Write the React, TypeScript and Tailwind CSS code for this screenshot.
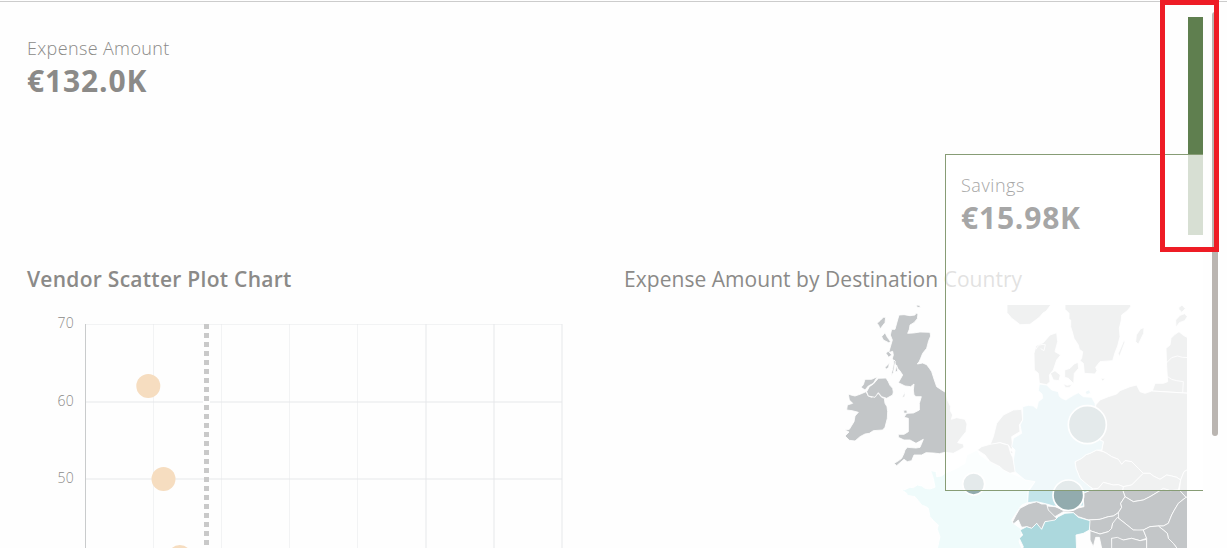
import React from "react";

const land = "#c3c6c8";

const greyLands: string[] = [
  // Great Britain
  "207,75 222,74 240,77 255,75 258,69 264,72 262,86 252,98 240,105 238,118 233,130 250,129 270,126 300,127 302,138 296,152 290,175 278,190 272,205 268,214 262,222 278,219 290,224 299,236 305,245 313,270 320,290 335,300 348,308 352,330 362,350 361,362 368,375 364,388 380,383 405,388 411,402 408,425 392,445 383,458 400,462 402,472 385,482 370,490 345,487 328,491 310,489 288,488 275,495 252,495 245,512 232,515 222,508 200,527 192,520 203,514 215,505 222,490 225,480 232,472 258,474 270,472 280,448 258,460 240,450 222,450 205,442 205,433 222,433 235,425 235,385 222,382 230,370 250,369 268,360 268,340 274,320 258,320 252,315 250,300 252,282 242,290 225,288 205,278 218,255 210,243 204,236 192,215 187,205 190,195 188,184 176,188 187,150 181,135 185,118 195,118 201,96",
  // Ireland
  "55,312 63,315 75,318 92,312 108,305 115,318 125,322 145,310 155,322 163,325 165,340 171,350 173,365 172,385 165,412 158,420 130,422 118,430 105,432 90,440 75,453 58,451 45,438 57,426 44,420 58,418 72,395 75,378 85,367 66,362 50,360 52,345 68,340 58,330",
  "110,305 118,290 130,282 145,265 168,264 175,275 180,286 188,295 190,306 188,315 170,325 155,320 145,308 135,322 115,318",
  "93,292 100,284 105,268 125,268 142,260 130,280 115,288 105,300",
  // Western isles
  "141,100 150,92 160,82 167,82 165,98 150,117 146,106",
  "155,140 165,128 172,142 182,155 176,158 160,150",
  "168,190 175,183 180,190 186,194 176,202",
  "165,232 172,226 178,218 176,232 168,238",
  "183,257 189,232 192,210 196,214 190,248",
  "195,246 200,226 203,244",
  "258,45 268,46 272,53 262,52",
  "216,323 225,307 224,319",
  "221,361 230,360 232,369 222,370",
  // Norway, Sweden
  "531,40 531,68 545,85 555,92 570,104 600,103 620,88 628,82 640,68 648,64 660,48 665,40",
  "705,40 705,58 717,70 717,88 722,90 722,110 727,126 732,145 745,165 748,178 758,185 755,205 750,212 760,220 763,250 795,252 801,242 797,232 810,215 848,212 855,188 863,168 870,140 868,115 874,90 875,75 892,62 902,50 902,40",
  "882,150 885,156 868,201 865,190",
  "932,116 942,113 941,130 925,163 917,155 919,135",
  "1046,53 1056,45 1066,56 1055,67 1047,58",
  "1037,90 1050,76 1064,71 1072,80 1064,92 1048,98 1038,112",
  // Denmark
  "628,280 625,250 613,240 612,190 618,167 640,158 660,135 680,128 683,155 675,185 692,195 680,210 670,240 658,255 660,275 650,284",
  "661,250 675,242 691,255 687,272 670,270",
  "704,240 720,235 732,222 744,217 746,235 733,250 731,281 715,265 704,262",
  "699,281 712,286 727,282 718,293 707,293",
  "812,265 826,265 818,274",
  // Baltic states
  "1047,125 1060,136 1080,147 1080,310 967,303 975,280 1000,280 1013,275 1010,230 1008,175 1020,165 1023,145 1035,133",
  // Netherlands, Belgium
  "480,465 490,440 500,400 520,375 550,360 575,358 578,390 568,405 570,425 545,440 548,470 540,490 550,490 535,465 510,458",
  "442,480 455,470 480,463 510,458 522,462 535,465 542,490 548,502 552,520 558,545 540,550 520,540 510,530 480,515 465,495",
  // Poland
  "797,345 810,330 835,320 860,312 870,302 900,290 920,285 930,305 945,310 965,303 1080,310 1080,535 1062,545 1052,570 1040,562 1025,558 1010,555 990,568 970,558 960,550 940,550 925,535 905,515 885,512 875,523 865,508 845,500 830,490 815,482 820,455 810,450 815,430 815,400 800,375",
  // Czechia, Slovakia
  "735,515 755,505 768,494 780,490 800,480 820,485 830,490 845,500 865,508 875,523 885,512 905,515 925,535 940,550 920,570 905,585 880,590 865,584 850,585 820,577 805,595 790,597 765,580 750,565 738,535",
  "940,550 960,550 970,558 990,568 1010,555 1025,558 1040,562 1052,570 1045,600 1020,602 1000,596 985,605 960,620 940,630 910,635 885,620 878,600 880,590 905,585 920,570",
  // Austria
  "650,648 675,650 700,660 740,655 762,650 758,610 790,597 805,595 820,577 850,585 865,584 880,590 878,600 885,620 872,640 875,652 865,668 850,678 835,680 810,688 775,690 745,680 730,668 700,665 675,680 655,670",
  // Hungary
  "885,620 910,635 940,630 960,620 985,605 1000,595 1020,602 1050,600 1068,622 1045,640 1032,662 1025,675 1015,700 1000,708 985,708 960,710 940,720 925,722 910,720 885,700 860,680 865,668 875,652 872,640",
  // Romania and its northern neighbour
  "1052,570 1062,545 1080,535 1080,620 1068,622 1048,600",
  "1068,622 1080,620 1080,780 1045,780 1030,760 1015,745 1012,730 1000,720 985,708 1000,708 1015,700 1025,675 1032,662 1045,640",
  // Slovenia, Croatia and Bosnia
  "775,690 810,688 835,680 850,678 865,668 866,685 848,700 845,715 835,725 810,732 780,722 776,705",
  "780,722 810,732 835,725 845,715 848,700 862,682 885,700 910,720 940,720 950,745 930,752 905,745 880,750 845,745 848,780 815,775 808,742 797,742 790,770 780,750",
  "845,745 862,742 880,750 905,745 930,752 950,748 950,780 845,780",
  "940,720 960,710 985,708 1000,720 1012,730 1015,745 1030,760 1045,780 950,780 950,745",
  // Switzerland
  "548,695 558,675 570,655 595,642 620,635 635,642 650,642 655,660 670,675 680,685 675,695 645,695 635,718 627,714 620,700 605,715 590,710 575,712 570,702 565,690 550,702",
];

const france =
  "442,480 410,495 405,520 380,535 345,550 335,558 320,560 318,545 302,542 310,565 315,592 300,597 285,595 275,588 262,585 250,593 240,592 225,599 213,598 230,610 232,616 255,620 265,632 275,645 288,650 295,655 300,680 312,694 325,705 322,718 330,740 320,785 580,785 567,755 578,720 550,700 545,690 575,645 593,638 595,600 615,575 580,565 545,550 520,535 480,515 450,495";
const germany =
  "578,350 595,346 610,348 620,356 625,335 638,325 636,312 625,302 628,282 650,285 665,300 685,305 688,318 695,325 708,330 715,325 730,316 745,308 760,320 785,322 795,340 800,375 815,400 815,430 810,450 820,455 815,480 800,480 780,490 768,494 755,505 735,515 738,535 750,565 770,582 788,597 760,610 760,648 670,648 650,642 620,635 593,638 595,605 615,575 585,570 555,545 550,510 555,480 545,470 550,445 575,430 570,405 578,390";
const italy =
  "570,720 590,710 605,715 620,700 635,718 645,695 675,690 685,680 705,670 730,668 745,682 780,692 778,720 760,730 738,735 740,785 575,785 580,770 568,745 578,735";

function EuropeMap() {
  return (
    <svg className="block h-[243px] w-[357px]" viewBox="0 45 1071 729">
      <g stroke="#fff" strokeWidth="2.5" strokeLinejoin="round">
        <polygon points={france} fill="#effbfb" />
        {greyLands.map((points) => (
          <polygon key={points} points={points} fill={land} />
        ))}
        <polygon points={germany} fill="#c3e4ea" />
        <polygon points="765,305 778,299 782,310 770,314" fill="#c3e4ea" />
        <polygon points={italy} fill="#acd8dd" />
        <g fill="none">
          <polyline points="1008,220 1025,203 1042,198 1058,202 1080,203" />
          <polyline points="1013,260 1025,268 1040,272 1060,275 1058,308" />
          <path d="M618 178q6-18 28-14l-4 18-10-6" />
        </g>
      </g>
      <g fill="#92abae" stroke="#fff" strokeWidth="5">
        <circle cx="431" cy="582" r="33" />
        <circle cx="772" cy="404" r="57" />
        <circle cx="715" cy="616" r="46" />
      </g>
    </svg>
  );
}

const columns = [
  { x: 68, w: 1 },
  { x: 136, w: 1 },
  { x: 204, w: 1 },
  { x: 272, w: 1 },
  { x: 340, w: 2 },
  { x: 408, w: 2 },
  { x: 476, w: 2 },
];

function ScatterPlot() {
  return (
    <svg className="block h-[224px] w-[478px]" viewBox="0 0 478 224">
      <g fill="#e5e7ea" fillOpacity="0.5">
        <rect width="477" height="1" />
        <rect y="77" width="477" height="2" />
        <rect y="154" width="477" height="2" />
        {columns.map((c) => (
          <rect key={c.x} x={c.x} width={c.w} height="224" />
        ))}
      </g>
      <rect width="1" height="224" fill="#c9cbcc" />
      <rect x="118" y="76" width="7" height="4" fill="#fefefe" />
      <path d="M121.5 0V224" stroke="#c9c9c9" strokeWidth="5" strokeDasharray="5 4" />
      <g fill="#f6ddc0">
        <circle cx="63.3" cy="62" r="12" />
        <circle cx="78.5" cy="155" r="12" />
        <circle cx="94.8" cy="233" r="12" />
      </g>
    </svg>
  );
}

export default function App() {
  return (
    <div className="relative flex h-[548px] w-full flex-col overflow-hidden bg-[#fefefe] pt-px font-['Open_Sans','Noto_Sans',sans-serif] text-[#8b8a88]">
      <header className="h-[266px] border-t border-[#cccccc] pr-6 pl-[27px]">
        <div className="flex justify-between">
          <div className="pt-[34px]">
            <div className="text-[18px] leading-6 font-light tracking-[0.36px]">Expense Amount</div>
            <div className="mt-[3px] text-[30px] leading-9 font-bold tracking-[0.85px]">€132.0K</div>
          </div>
          <div className="mt-[15px] h-[218px] w-[15px] bg-[#5f7f4f]" />
        </div>
      </header>

      <main className="flex flex-1 pl-[27px]">
        <section className="w-[597px]">
          <h2 className="text-[21px] leading-6 font-semibold tracking-[0.27px] whitespace-nowrap">Vendor Scatter Plot Chart</h2>
          <div className="mt-[33px] flex">
            <div className="-mt-[11px] flex w-[58px] flex-col gap-[57.5px] pr-[11px] text-right text-[14px] leading-5 font-light tracking-[0.3px]">
              <span>70</span>
              <span>60</span>
              <span>50</span>
            </div>
            <ScatterPlot />
          </div>
        </section>
        <section className="w-[563px]">
          <h2 className="text-[21px] leading-6 tracking-[0.04px] whitespace-nowrap">Expense Amount by Destination Country</h2>
          <div className="mt-[14px] pl-[206px]">
            <EuropeMap />
          </div>
        </section>
      </main>

      <div className="absolute top-[154px] left-[945px] h-[337px] w-[258px] border-y border-l border-[#879c75] bg-white/75 pt-[18px] pl-[15px] text-[#a6a6a6]">
        <div className="text-[18px] leading-6 font-light tracking-[0.55px]">Savings</div>
        <div className="mt-[3px] text-[30px] leading-9 font-bold tracking-[0.8px]">€15.98K</div>
      </div>

      <div className="absolute top-3 left-[1212px] h-[424px] w-1.5 rounded-full bg-[#bab5b1]" />
      <div className="absolute top-0 left-[1160px] h-[252px] w-[59px] border-5 border-[#ee1c25]" />
    </div>
  );
}
